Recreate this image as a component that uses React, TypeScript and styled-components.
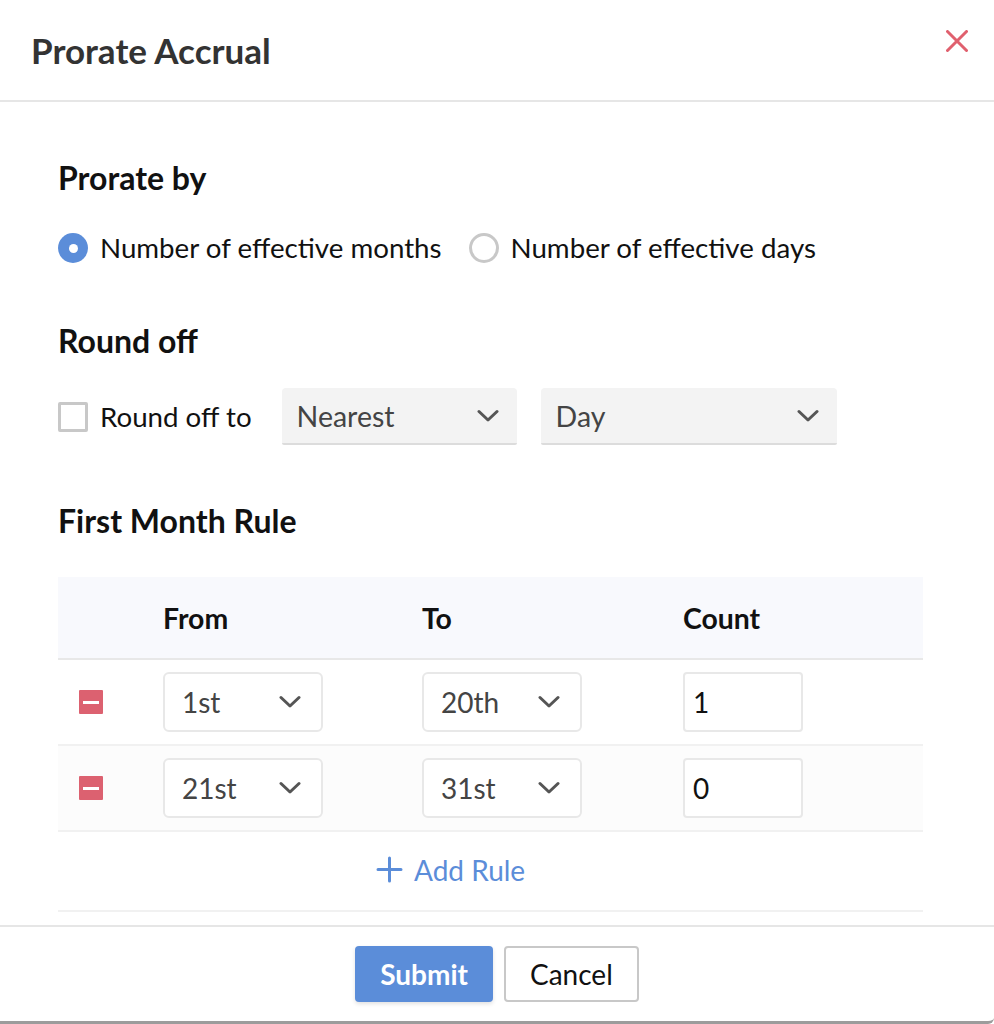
import React from 'react';
import styled, { createGlobalStyle } from 'styled-components';

const GlobalStyle = createGlobalStyle`
  html, body {
    margin: 0;
    padding: 0;
    background: #ffffff;
  }

  body {
    font-family: 'Lato', 'Noto Sans', sans-serif;
    color: #111111;
  }
`;

const Dialog = styled.div`
  width: 994px;
  height: 1024px;
  box-sizing: border-box;
  display: flex;
  flex-direction: column;
  background: #ffffff;
  border-bottom: 3px solid #9c9c9c;
  border-bottom-right-radius: 6px;
`;

const Header = styled.header`
  height: 100px;
  flex-shrink: 0;
  display: flex;
  align-items: center;
  justify-content: space-between;
  padding: 0 26px 0 31px;
  border-bottom: 2px solid #e6e6e6;
`;

const Title = styled.h1`
  margin: 0;
  font-size: 35px;
  font-weight: 700;
  color: #333333;
`;

const CloseButton = styled.button`
  width: 22px;
  height: 22px;
  padding: 0;
  margin-top: -18px;
  border: none;
  background: transparent;
  display: flex;
  align-items: center;
  justify-content: center;
  cursor: pointer;
`;

const Body = styled.main`
  flex: 1;
  padding: 58px 71px 0 58px;
  display: flex;
  flex-direction: column;
`;

const SectionTitle = styled.h2<{ $gap: number }>`
  margin: 0 0 ${(p) => p.$gap}px;
  font-size: 32px;
  line-height: 36px;
  font-weight: 700;
  color: #111111;
`;

const OptionRow = styled.div<{ $gap: number }>`
  display: flex;
  align-items: center;
  margin-bottom: ${(p) => p.$gap}px;
`;

const Choice = styled.label<{ $space?: number }>`
  display: flex;
  align-items: center;
  gap: 12px;
  margin-right: ${(p) => p.$space ?? 27}px;
  font-size: 27.7px;
  line-height: 36px;
  color: #111111;
`;

const Radio = styled.span<{ $checked?: boolean }>`
  width: 30px;
  height: 30px;
  box-sizing: border-box;
  border-radius: 50%;
  flex-shrink: 0;
  background: ${(p) => (p.$checked ? '#5b8dd9' : '#ffffff')};
  border: ${(p) => (p.$checked ? 'none' : '3px solid #c8c8c8')};
  display: flex;
  align-items: center;
  justify-content: center;

  &::after {
    content: '';
    display: ${(p) => (p.$checked ? 'block' : 'none')};
    width: 9px;
    height: 9px;
    border-radius: 50%;
    background: #ffffff;
  }
`;

const Checkbox = styled.span`
  width: 30px;
  height: 30px;
  box-sizing: border-box;
  flex-shrink: 0;
  border: 3px solid #c8c8c8;
  border-radius: 2px;
`;

const FilledSelect = styled.div<{ $width: number }>`
  width: ${(p) => p.$width}px;
  height: 57px;
  box-sizing: border-box;
  display: flex;
  align-items: center;
  justify-content: space-between;
  padding: 0 18px 0 15px;
  margin-right: 24px;
  background: #f3f3f3;
  border-bottom: 2px solid #dcdcdc;
  border-radius: 4px 4px 2px 2px;
  font-size: 28.5px;
  color: #444444;
`;

const Table = styled.div`
  margin-top: 38px;
  display: flex;
  flex-direction: column;
`;

const TableRow = styled.div<{ $head?: boolean; $alt?: boolean }>`
  display: grid;
  grid-template-columns: 105px 259px 261px 1fr;
  align-items: center;
  height: ${(p) => (p.$head ? '81px' : '84px')};
  background: ${(p) => (p.$head ? '#f8f9fd' : p.$alt ? '#fcfcfc' : '#ffffff')};
  border-bottom: ${(p) => (p.$head ? '2px solid #e8e8e8' : '2px solid #f1f1f1')};
`;

const HeadCell = styled.div`
  font-size: 28.4px;
  font-weight: 700;
  color: #111111;
`;

const IconCell = styled.div`
  padding-left: 21px;
  display: flex;
  align-items: center;
`;

const RemoveButton = styled.button`
  width: 24px;
  height: 24px;
  padding: 0;
  border: none;
  border-radius: 1px;
  background: #dc6170;
  display: flex;
  align-items: center;
  justify-content: center;
  cursor: pointer;

  &::after {
    content: '';
    width: 16px;
    height: 3px;
    background: #ffffff;
  }
`;

const OutlineSelect = styled.div`
  width: 160px;
  height: 60px;
  box-sizing: border-box;
  display: flex;
  align-items: center;
  justify-content: space-between;
  padding: 0 20px 0 17px;
  background: #ffffff;
  border: 2px solid #e8e8e8;
  border-radius: 6px;
  font-size: 28px;
  color: #444444;
`;

const CountInput = styled.input`
  width: 120px;
  height: 60px;
  box-sizing: border-box;
  padding: 0 8px;
  background: #ffffff;
  border: 2px solid #e8e8e8;
  border-radius: 4px;
  font-family: 'Lato', sans-serif;
  font-size: 28px;
  color: #111111;
  outline: none;
`;

const AddRow = styled.div`
  height: 78px;
  display: flex;
  align-items: center;
  padding-left: 318px;
  border-bottom: 2px solid #f1f1f1;
`;

const AddButton = styled.button`
  display: flex;
  align-items: center;
  gap: 11px;
  padding: 0;
  margin-top: -3px;
  border: none;
  background: transparent;
  font-family: 'Lato', sans-serif;
  font-size: 28px;
  color: #5b8dd9;
  cursor: pointer;
`;

const Footer = styled.footer`
  flex-shrink: 0;
  height: 96px;
  box-sizing: border-box;
  display: flex;
  justify-content: center;
  gap: 11px;
  padding: 19px 0 0 0;
  border-top: 2px solid #e6e6e6;
`;

const Button = styled.button<{ $primary?: boolean }>`
  height: 56px;
  box-sizing: border-box;
  padding: 0 ${(p) => (p.$primary ? '25px' : '24px')};
  border-radius: 4px;
  border: ${(p) => (p.$primary ? 'none' : '2px solid #c8c8c8')};
  background: ${(p) => (p.$primary ? '#5b8dd9' : '#ffffff')};
  color: ${(p) => (p.$primary ? '#ffffff' : '#111111')};
  font-family: 'Lato', sans-serif;
  font-size: 28px;
  font-weight: ${(p) => (p.$primary ? 700 : 400)};
  box-shadow: ${(p) => (p.$primary ? '0 2px 4px rgba(0,0,0,0.12)' : 'none')};
  cursor: pointer;
`;

const Chevron = () => (
  <svg width="22" height="14" viewBox="0 0 22 14" fill="none">
    <path d="M2 2.5 L11 11 L20 2.5" stroke="#555555" strokeWidth="3" strokeLinecap="round" strokeLinejoin="round" />
  </svg>
);

const CloseIcon = () => (
  <svg width="22" height="22" viewBox="0 0 22 22" fill="none">
    <path d="M1.5 1.5 L20.5 20.5 M20.5 1.5 L1.5 20.5" stroke="#e0606e" strokeWidth="3" strokeLinecap="round" />
  </svg>
);

const PlusIcon = () => (
  <svg width="27" height="27" viewBox="0 0 27 27" fill="none">
    <path d="M13.5 2 V25 M2 13.5 H25" stroke="#5b8dd9" strokeWidth="3" strokeLinecap="round" />
  </svg>
);

const rules = [
  { from: '1st', to: '20th', count: '1' },
  { from: '21st', to: '31st', count: '0' },
];

export default function App() {
  return (
    <>
      <GlobalStyle />
      <Dialog>
        <Header>
          <Title>Prorate Accrual</Title>
          <CloseButton aria-label="Close">
            <CloseIcon />
          </CloseButton>
        </Header>

        <Body>
          <SectionTitle $gap={34}>Prorate by</SectionTitle>
          <OptionRow $gap={57}>
            <Choice>
              <Radio $checked />
              Number of effective months
            </Choice>
            <Choice>
              <Radio />
              Number of effective days
            </Choice>
          </OptionRow>

          <SectionTitle $gap={29}>Round off</SectionTitle>
          <OptionRow $gap={58}>
            <Choice $space={30}>
              <Checkbox />
              Round off to
            </Choice>
            <FilledSelect $width={235}>
              Nearest
              <Chevron />
            </FilledSelect>
            <FilledSelect $width={296}>
              Day
              <Chevron />
            </FilledSelect>
          </OptionRow>

          <SectionTitle $gap={0}>First Month Rule</SectionTitle>
          <Table>
            <TableRow $head>
              <div />
              <HeadCell>From</HeadCell>
              <HeadCell>To</HeadCell>
              <HeadCell>Count</HeadCell>
            </TableRow>
            {rules.map((rule, i) => (
              <TableRow key={rule.from} $alt={i % 2 === 1}>
                <IconCell>
                  <RemoveButton aria-label="Remove rule" />
                </IconCell>
                <div>
                  <OutlineSelect>
                    {rule.from}
                    <Chevron />
                  </OutlineSelect>
                </div>
                <div>
                  <OutlineSelect>
                    {rule.to}
                    <Chevron />
                  </OutlineSelect>
                </div>
                <div>
                  <CountInput defaultValue={rule.count} />
                </div>
              </TableRow>
            ))}
            <AddRow>
              <AddButton>
                <PlusIcon />
                Add Rule
              </AddButton>
            </AddRow>
          </Table>
        </Body>

        <Footer>
          <Button $primary>Submit</Button>
          <Button>Cancel</Button>
        </Footer>
      </Dialog>
    </>
  );
}
